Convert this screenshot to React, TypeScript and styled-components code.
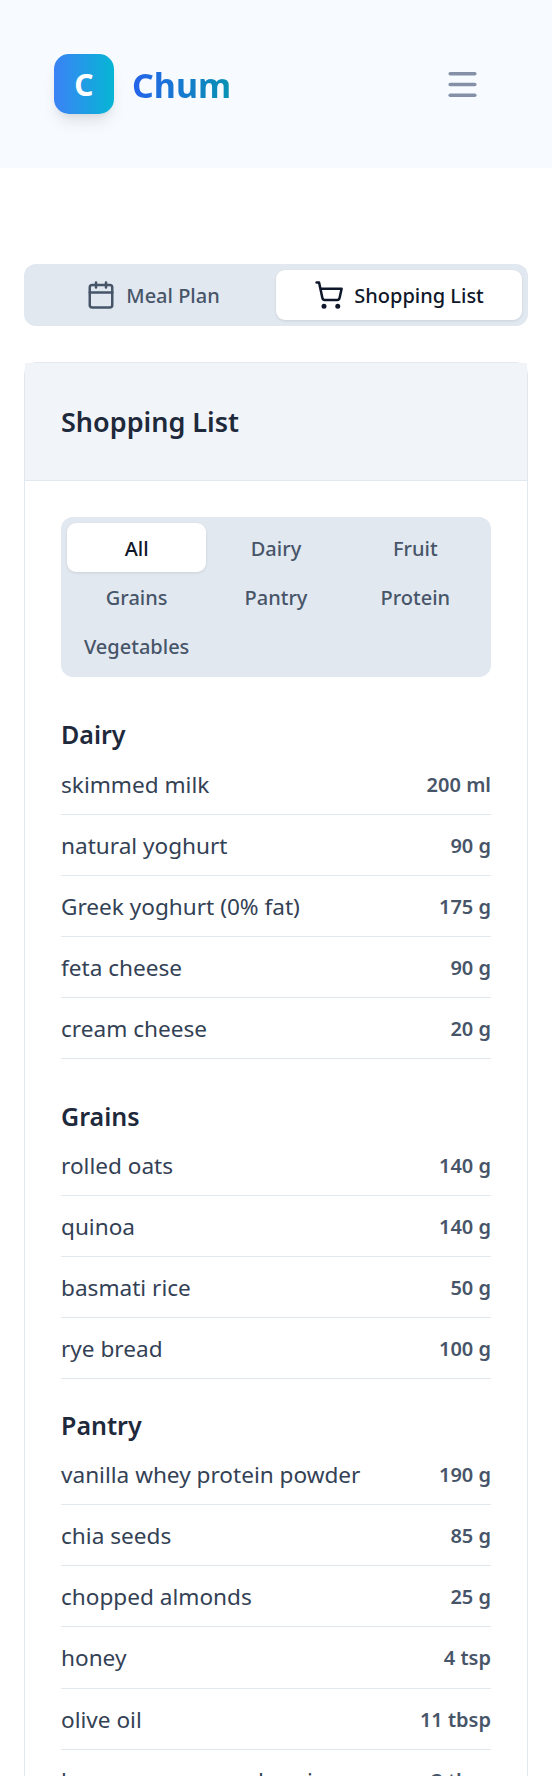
import styled, { createGlobalStyle } from 'styled-components';
import { Calendar, ShoppingCart, Menu } from 'lucide-react';

const GlobalStyle = createGlobalStyle`
    html, body {
        margin: 0;
        padding: 0;
        background: #ffffff;
    }
    body {
        font-family: "Noto Sans", "Open Sans", sans-serif;
        color: #1e293b;
        height: 1776px;
        overflow: hidden;
    }
    * {
        box-sizing: border-box;
    }
`

const Header = styled.header`
    height: 168px;
    background: #f7fafe;
    padding: 0 71px 0 54px;
    display: flex;
    justify-content: space-between;
    align-items: center;
`

const Brand = styled.div`
    display: flex;
    align-items: center;
    gap: 18px;
`

const LogoMark = styled.div`
    width: 60px;
    height: 60px;
    border-radius: 15px;
    background: linear-gradient(90deg, #3b82f6, #06b6d4);
    box-shadow: 0 10px 15px -3px rgba(0, 0, 0, 0.1), 0 4px 6px -2px rgba(0, 0, 0, 0.05);
    color: #ffffff;
    font-size: 30px;
    font-weight: 700;
    display: flex;
    align-items: center;
    justify-content: center;
`

const BrandName = styled.span`
    padding-top: 1px;
    font-size: 34px;
    font-weight: 700;
    background: linear-gradient(90deg, #2563eb, #0891b2);
    -webkit-background-clip: text;
    background-clip: text;
    color: transparent;
`

const MenuButton = styled.button`
    border: none;
    background: none;
    padding: 0;
    color: #8390a6;
    display: flex;
`

const Main = styled.main`
    padding: 96px 24px 0;
`

const TabBar = styled.div`
    background: #e2e8f0;
    border-radius: 12px;
    padding: 6px;
    height: 62px;
    display: grid;
    grid-template-columns: 1fr 1fr;
    margin-bottom: 36px;
`

const Tab = styled.button<{ $active?: boolean }>`
    border: none;
    border-radius: 9px;
    background: ${p => (p.$active ? '#ffffff' : 'transparent')};
    box-shadow: ${p => (p.$active ? '0 1px 3px rgba(0, 0, 0, 0.1)' : 'none')};
    color: ${p => (p.$active ? '#0f172a' : '#475569')};
    font: inherit;
    font-size: 20px;
    font-weight: 500;
    display: flex;
    align-items: center;
    justify-content: center;
    gap: 10px;
`

const Card = styled.section`
    border: 1px solid #e2e8f0;
    border-radius: 12px;
    background: #ffffff;
`

const CardHeader = styled.div`
    height: 118px;
    background: #f1f5f9;
    border-bottom: 1px solid #e2e8f0;
    padding: 0 36px;
    display: flex;
    align-items: center;
`

const CardTitle = styled.h2`
    margin: 0;
    font-size: 27px;
    font-weight: 600;
    color: #1e293b;
`

const CardBody = styled.div`
    padding: 36px;
`

const FilterGrid = styled.div`
    background: #e2e8f0;
    border-radius: 12px;
    padding: 6px;
    display: grid;
    grid-template-columns: repeat(3, 1fr);
    margin-bottom: 38.5px;
`

const FilterButton = styled.button<{ $active?: boolean }>`
    height: 49.33px;
    padding: 1px 0 0;
    border: none;
    border-radius: 9px;
    background: ${p => (p.$active ? '#ffffff' : 'transparent')};
    box-shadow: ${p => (p.$active ? '0 1px 3px rgba(0, 0, 0, 0.1)' : 'none')};
    color: ${p => (p.$active ? '#0f172a' : '#475569')};
    font: inherit;
    font-size: 20px;
    font-weight: 500;
`

const Category = styled.div<{ $gap: number }>`
    margin-bottom: ${p => p.$gap}px;
`

const CategoryTitle = styled.h3`
    margin: 0;
    font-size: 25px;
    font-weight: 600;
    color: #1e293b;
    line-height: 38px;
`

const Row = styled.div`
    height: 61.2px;
    padding-top: 1px;
    border-bottom: 1px solid #e2e8f0;
    display: flex;
    justify-content: space-between;
    align-items: center;
`

const ItemName = styled.span`
    font-size: 22.6px;
    color: #334155;
`

const ItemQty = styled.span`
    font-size: 20px;
    font-weight: 600;
    color: #475569;
`

const filters = ['All', 'Dairy', 'Fruit', 'Grains', 'Pantry', 'Protein', 'Vegetables']

const groups = [
    {
        title: 'Dairy',
        gap: 37.3,
        items: [
            ['skimmed milk', '200 ml'],
            ['natural yoghurt', '90 g'],
            ['Greek yoghurt (0% fat)', '175 g'],
            ['feta cheese', '90 g'],
            ['cream cheese', '20 g'],
        ],
    },
    {
        title: 'Grains',
        gap: 26.3,
        items: [
            ['rolled oats', '140 g'],
            ['quinoa', '140 g'],
            ['basmati rice', '50 g'],
            ['rye bread', '100 g'],
        ],
    },
    {
        title: 'Pantry',
        gap: 24,
        items: [
            ['vanilla whey protein powder', '190 g'],
            ['chia seeds', '85 g'],
            ['chopped almonds', '25 g'],
            ['honey', '4 tsp'],
            ['olive oil', '11 tbsp'],
            ['lemon or sesame dressing', '3 tbsp'],
        ],
    },
]

const App = () => {
    return <>
        <GlobalStyle />
        <Header>
            <Brand>
                <LogoMark>C</LogoMark>
                <BrandName>Chum</BrandName>
            </Brand>
            <MenuButton aria-label='Menu'>
                <Menu size={37} strokeWidth={2.2} />
            </MenuButton>
        </Header>
        <Main>
            <TabBar>
                <Tab>
                    <Calendar size={30} strokeWidth={2} />
                    Meal Plan
                </Tab>
                <Tab $active>
                    <ShoppingCart size={30} strokeWidth={2} />
                    Shopping List
                </Tab>
            </TabBar>
            <Card>
                <CardHeader>
                    <CardTitle>Shopping List</CardTitle>
                </CardHeader>
                <CardBody>
                    <FilterGrid>
                        {filters.map((f, i) => (
                            <FilterButton key={f} $active={i === 0}>{f}</FilterButton>
                        ))}
                    </FilterGrid>
                    {groups.map(g => (
                        <Category key={g.title} $gap={g.gap}>
                            <CategoryTitle>{g.title}</CategoryTitle>
                            {g.items.map(([name, qty]) => (
                                <Row key={name}>
                                    <ItemName>{name}</ItemName>
                                    <ItemQty>{qty}</ItemQty>
                                </Row>
                            ))}
                        </Category>
                    ))}
                </CardBody>
            </Card>
        </Main>
    </>
}

export default App
